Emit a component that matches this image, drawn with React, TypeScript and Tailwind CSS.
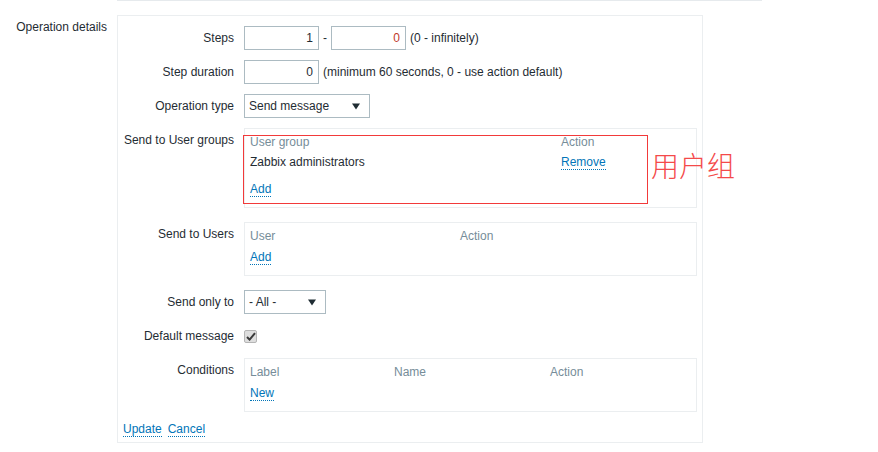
import React from 'react';

const LinkText = ({ children }: { children: React.ReactNode }) => (
  <span className="text-[#0275b8] border-b border-dotted border-[#0275b8] leading-[14px] inline-block">
    {children}
  </span>
);

const FormRow = ({
  label,
  top = false,
  className = '',
  children,
}: {
  label: string;
  top?: boolean;
  className?: string;
  children: React.ReactNode;
}) => (
  <div className={`flex ${top ? 'items-start' : 'items-center min-h-[24px]'} ${className}`}>
    <div className={`w-[126px] pr-[10px] text-right shrink-0 leading-[16px] whitespace-nowrap ${top ? 'pt-[4px]' : ''}`}>
      {label}
    </div>
    <div className="flex items-center">{children}</div>
  </div>
);

const TextBox = ({ value, red = false }: { value: string; red?: boolean }) => (
  <div
    className={`w-[75px] h-[24px] border border-[#acbbc2] bg-white px-[5px] flex items-center justify-end ${
      red ? 'text-[#c0392b]' : ''
    }`}
  >
    {value}
  </div>
);

const Select = ({ value, width }: { value: string; width: string }) => (
  <div className={`${width} h-[24px] border border-[#acbbc2] bg-white pl-[4px] pr-[9px] flex items-center justify-between`}>
    <span>{value}</span>
    <svg width="8" height="7" viewBox="0 0 8 7">
      <path d="M0 0.5 H8 L4 6.5 Z" fill="#1f2c33" />
    </svg>
  </div>
);

const TableBox = ({
  cols,
  children,
}: {
  cols: { title: string; w: string }[];
  children: React.ReactNode;
}) => (
  <div className="w-[453px] border border-[#ebeef0] px-[5px] pt-[5px] pb-[11px]">
    <div className="flex leading-[16px] text-[#768d99]">
      {cols.map((c) => (
        <div key={c.title} className={c.w}>
          {c.title}
        </div>
      ))}
    </div>
    {children}
  </div>
);

export default function App() {
  return (
    <div className="relative w-[878px] h-[452px] bg-white font-['Liberation_Sans',Arial,sans-serif] text-[12px] text-[#1f2c33]">
      <div className="ml-[117px] w-[645px] h-px bg-[#e6eaed]" />

      <div className="flex mt-[14px]">
        <div className="w-[117px] pr-[10px] pt-[4px] text-right leading-[16px] shrink-0">
          Operation details
        </div>

        <div className="w-[586px] h-[428px] border border-[#ebeef0] pt-[10px] pr-[5px]">
          <FormRow label="Steps">
            <TextBox value="1" />
            <span className="px-[4px]">-</span>
            <TextBox value="0" red />
            <span className="pl-[4px]">(0 - infinitely)</span>
          </FormRow>

          <FormRow label="Step duration" className="mt-[10px]">
            <TextBox value="0" />
            <span className="pl-[4px]">(minimum 60 seconds, 0 - use action default)</span>
          </FormRow>

          <FormRow label="Operation type" className="mt-[10px]">
            <Select value="Send message" width="w-[126px]" />
          </FormRow>

          <FormRow label="Send to User groups" top className="mt-[10px]">
            <TableBox
              cols={[
                { title: 'User group', w: 'w-[311px]' },
                { title: 'Action', w: 'w-[120px]' },
              ]}
            >
              <div className="flex leading-[16px] mt-[4px]">
                <div className="w-[311px]">Zabbix administrators</div>
                <div>
                  <LinkText>Remove</LinkText>
                </div>
              </div>
              <div className="mt-[10px] h-[16px]">
                <LinkText>Add</LinkText>
              </div>
            </TableBox>
          </FormRow>

          <FormRow label="Send to Users" top className="mt-[14px]">
            <TableBox
              cols={[
                { title: 'User', w: 'w-[210px]' },
                { title: 'Action', w: 'w-[120px]' },
              ]}
            >
              <div className="mt-[4px] h-[16px]">
                <LinkText>Add</LinkText>
              </div>
            </TableBox>
          </FormRow>

          <FormRow label="Send only to" className="mt-[14px]">
            <Select value="- All -" width="w-[82px]" />
          </FormRow>

          <FormRow label="Default message" className="mt-[10px]">
            <div className="w-[13px] h-[13px] rounded-[2px] border border-[#b5b5b5] bg-[#dedede] flex items-center justify-center">
              <svg width="10" height="9" viewBox="0 0 10 9">
                <path d="M1 5 L3.6 7.6 L9 1.2" stroke="#3a3a3a" strokeWidth="2" fill="none" />
              </svg>
            </div>
          </FormRow>

          <FormRow label="Conditions" top className="mt-[10px]">
            <TableBox
              cols={[
                { title: 'Label', w: 'w-[144px]' },
                { title: 'Name', w: 'w-[156px]' },
                { title: 'Action', w: 'w-[120px]' },
              ]}
            >
              <div className="mt-[4px] h-[16px]">
                <LinkText>New</LinkText>
              </div>
            </TableBox>
          </FormRow>

          <div className="flex gap-[6px] pl-[5px] mt-[10px] leading-[16px]">
            <LinkText>Update</LinkText>
            <LinkText>Cancel</LinkText>
          </div>
        </div>
      </div>

      {/* annotation overlay */}
      <div className="absolute left-[243px] top-[135px] w-[405px] h-[69px] text-[#f23a3a] border border-current" />
      <div className="absolute left-[651px] top-[147px] text-[28px] leading-[36px] text-[#f44a4a] font-['Noto_Sans_CJK_SC',sans-serif] font-light">
        用户组
      </div>
    </div>
  );
}
